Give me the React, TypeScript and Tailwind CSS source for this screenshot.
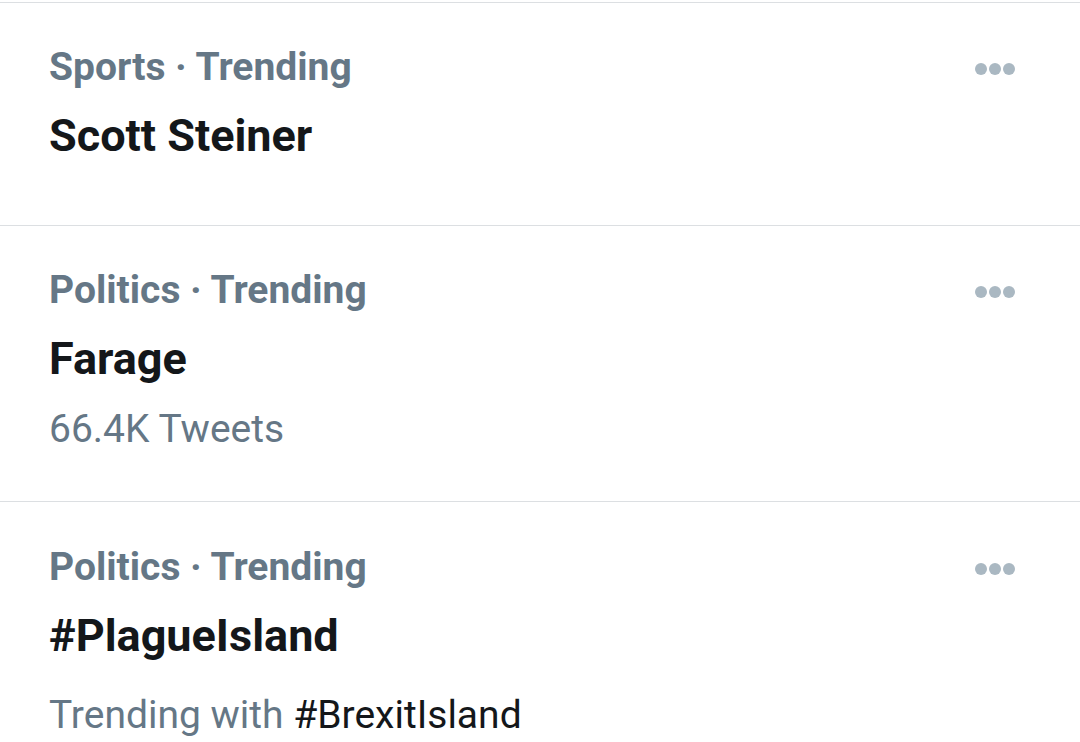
import React from "react";

interface TrendProps {
  category: string;
  title: string;
  sub?: React.ReactNode;
  className: string;
  subClass?: string;
}

const Dots = () => (
  <div className="mt-[2px] flex h-[46px] items-center gap-[2px]">
    <span className="block h-[12px] w-[12px] rounded-full bg-[#aab8c2]" />
    <span className="block h-[12px] w-[12px] rounded-full bg-[#aab8c2]" />
    <span className="block h-[12px] w-[12px] rounded-full bg-[#aab8c2]" />
  </div>
);

const Trend: React.FC<TrendProps> = ({ category, title, sub, className, subClass }) => {
  return (
    <div className={`flex items-start justify-between border-b border-[#dcdfe2] pl-[49px] pr-[65px] ${className}`}>
      <div className="flex flex-col">
        <div className="text-[39px] font-bold leading-[46px] text-[#657786]">{category}</div>
        <div className="mt-[21px] text-[45px] font-bold leading-[50px] text-[#14171a]">{title}</div>
        {sub && (
          <div className={`text-[39px] leading-[46px] text-[#657786] ${subClass ?? ""}`}>{sub}</div>
        )}
      </div>
      <Dots />
    </div>
  );
};

export default function App() {
  return (
    <div className="h-[742px] w-[1080px] overflow-hidden bg-white font-['Roboto',sans-serif]">
      <div className="mt-[2px] border-t border-[#dcdfe2]">
        <Trend category="Sports · Trending" title="Scott Steiner" className="pt-[41px] pb-[64px]" />
        <Trend
          category="Politics · Trending"
          title="Farage"
          sub="66.4K Tweets"
          subClass="mt-[22px]"
          className="pt-[41px] pb-[49px]"
        />
        <Trend
          category="Politics · Trending"
          title="#PlagueIsland"
          sub={
            <>
              Trending with <span className="text-[#14171a]">#BrexitIsland</span>
            </>
          }
          subClass="mt-[31px]"
          className="pt-[42px] pb-[40px]"
        />
      </div>
    </div>
  );
}
